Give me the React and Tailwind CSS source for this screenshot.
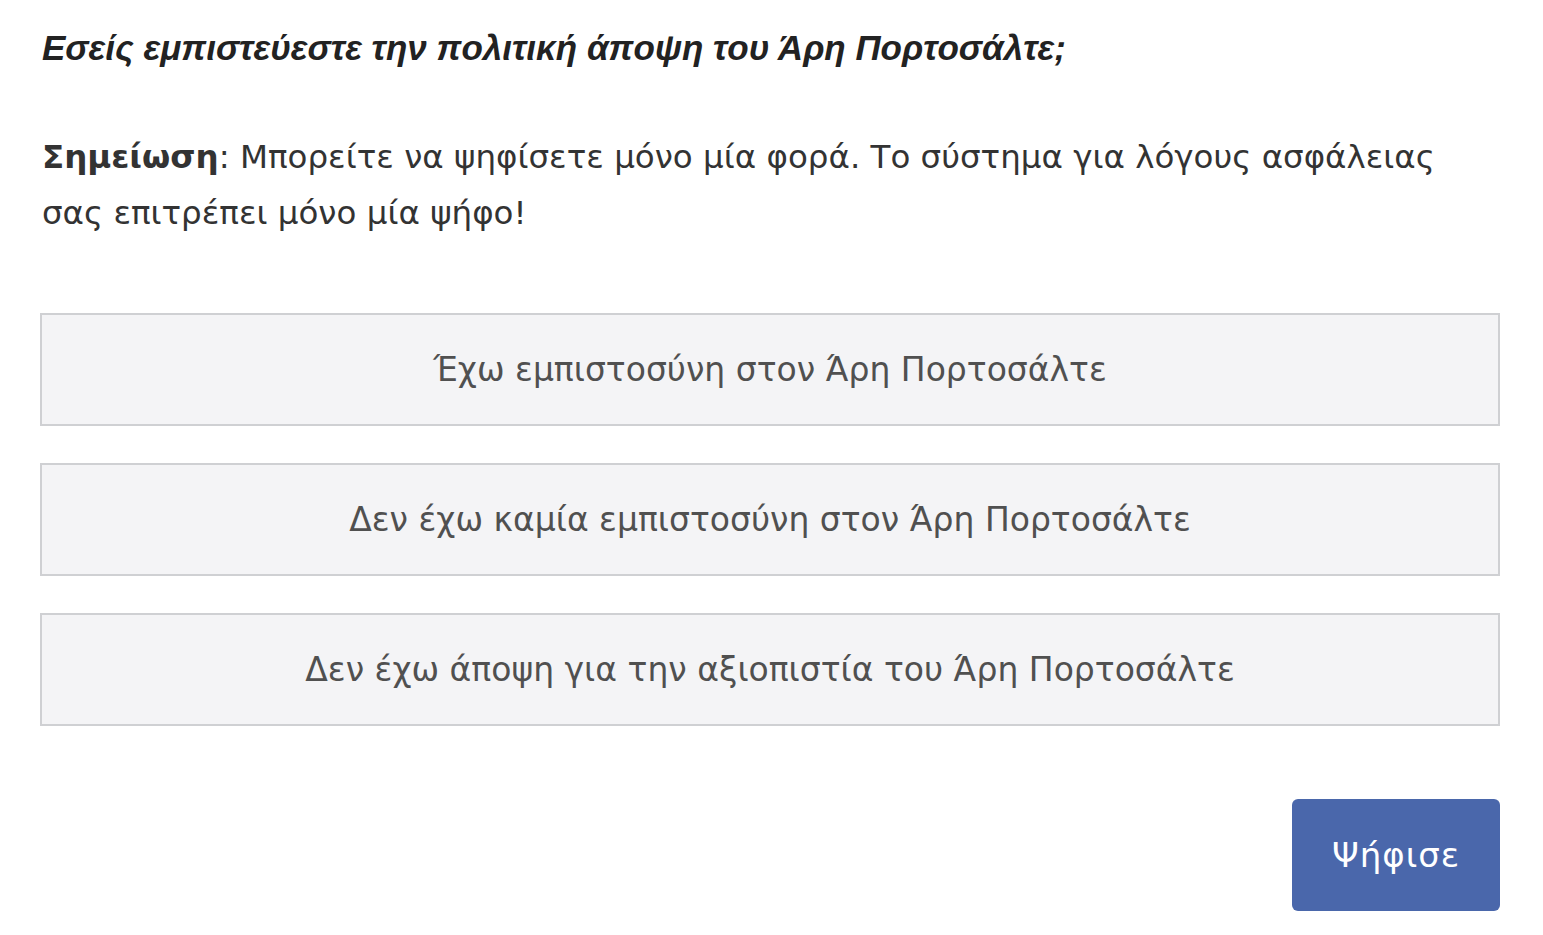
export default function App() {
  const options = [
    "Έχω εμπιστοσύνη στον Άρη Πορτοσάλτε",
    "Δεν έχω καμία εμπιστοσύνη στον Άρη Πορτοσάλτε",
    "Δεν έχω άποψη για την αξιοπιστία του Άρη Πορτοσάλτε",
  ];

  return (
    <div className="min-h-screen bg-white px-[40px] pt-[24px] pb-[24px] w-[1543px]">
      {/* Question */}
      <h2 className="font-['Liberation_Sans',sans-serif] text-[35px] leading-[48px] font-bold italic text-[#222] pl-[2px]">
        Εσείς εμπιστεύεστε την πολιτική άποψη του Άρη Πορτοσάλτε;
      </h2>

      {/* Note */}
      <p className="mt-[57px] w-[1440px] font-['DejaVu_Sans',sans-serif] text-[32.5px] leading-[56px] text-[#333] pl-[2px]">
        <b className="font-bold">Σημείωση</b>: Μπορείτε να ψηφίσετε μόνο μία φορά. Το σύστημα για λόγους
        ασφάλειας σας επιτρέπει μόνο μία ψήφο!
      </p>

      {/* Options */}
      <div className="mt-[72px] w-[1460px] flex flex-col gap-[37px]">
        {options.map((o) => (
          <button
            key={o}
            className="h-[113px] w-full border-2 border-[#cfd0d3] bg-[#f4f4f6] flex items-center justify-center font-['DejaVu_Sans',sans-serif] text-[33px] text-[#505050]"
          >
            {o}
          </button>
        ))}
      </div>

      {/* Submit */}
      <div className="mt-[73px] w-[1460px] flex justify-end">
        <button className="w-[208px] h-[112px] rounded-[6px] bg-[#4a67ab] text-white font-['DejaVu_Sans',sans-serif] text-[34px] tracking-[1px]">
          Ψήφισε
        </button>
      </div>
    </div>
  );
}
